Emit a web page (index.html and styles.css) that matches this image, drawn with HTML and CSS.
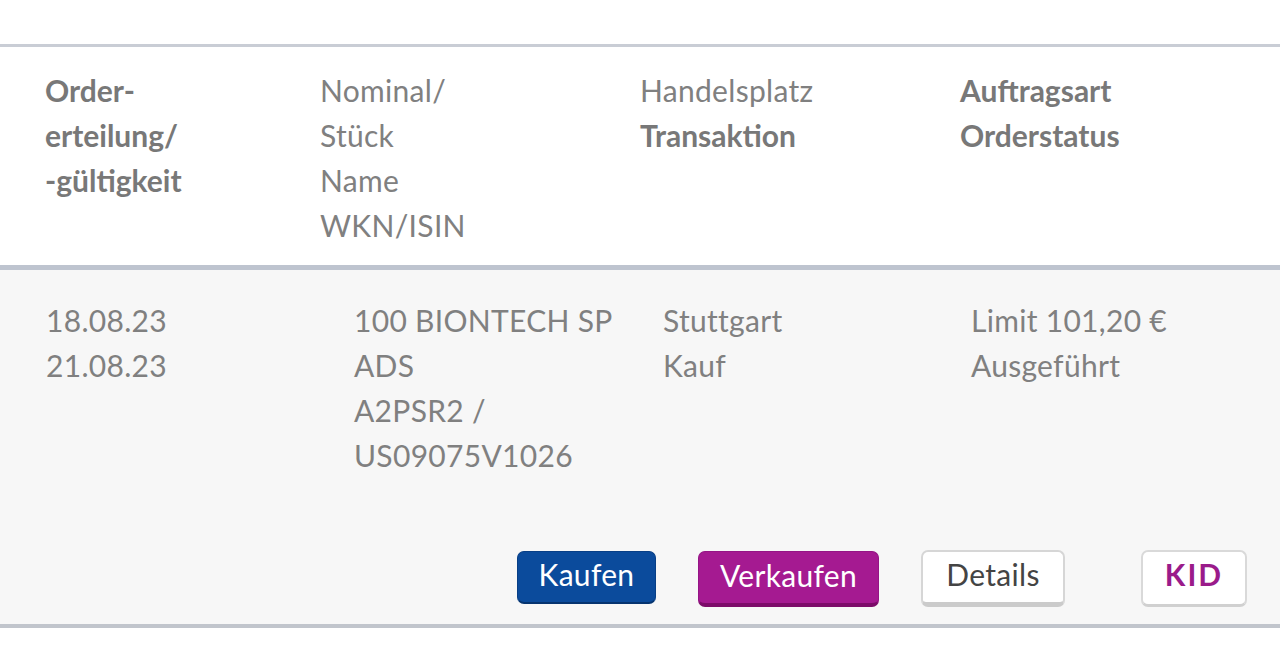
FILE: index.html
```html
<!DOCTYPE html>
<html lang="de">
<head>
<meta charset="utf-8">
<link rel="stylesheet" href="styles.css">
<title>Orderbuch</title>
</head>
<body>
<div class="page">
  <div class="top-space"></div>
  <div class="table">
    <div class="head">
      <div class="hcol c1"><b>Order-<br>erteilung/<br>-gültigkeit</b></div>
      <div class="hcol c2">Nominal/<br>Stück<br>Name<br>WKN/ISIN</div>
      <div class="hcol c3">Handelsplatz<br><b>Transaktion</b></div>
      <div class="hcol c4"><b>Auftragsart<br>Orderstatus</b></div>
    </div>
    <div class="row">
      <div class="cells">
        <div class="cell d1">18.08.23<br>21.08.23</div>
        <div class="cell d2">100 BIONTECH SP<br>ADS<br>A2PSR2 /<br>US09075V1026</div>
        <div class="cell d3">Stuttgart<br>Kauf</div>
        <div class="cell d4">Limit 101,20 €<br>Ausgeführt</div>
      </div>
      <div class="actions">
        <button class="btn buy">Kaufen</button>
        <button class="btn sell">Verkaufen</button>
        <button class="btn details">Details</button>
        <button class="btn kid">KID</button>
      </div>
    </div>
  </div>
</div>
</body>
</html>
```

FILE: styles.css
```css
html, body {
  margin: 0;
  padding: 0;
  background: #ffffff;
}
body {
  font-family: "Lato", "Liberation Sans", sans-serif;
  font-size: 30px;
  line-height: 45px;
  color: #808080;
  letter-spacing: 0.3px;
}
.page {
  width: 1280px;
  height: 646px;
  overflow: hidden;
}
.top-space {
  height: 44px;
}
.table {
  border-top: 3px solid #c9cdd5;
}
.head {
  display: grid;
  grid-template-columns: 275px 320px 320px 1fr;
  padding: 21px 0 17px 45px;
  background: #ffffff;
  border-bottom: 5px solid #bec4cf;
}
.head b {
  font-weight: 700;
  color: #787878;
  letter-spacing: 0;
}
.row {
  background: #f7f7f7;
  border-bottom: 4px solid #c1c5cc;
  padding: 28px 0 17px 0;
}
.cells {
  display: grid;
  grid-template-columns: 308px 309px 308px 1fr;
  padding-left: 46px;
  height: 180px;
}
.actions {
  display: flex;
  justify-content: flex-end;
  align-items: flex-start;
  gap: 42px;
  padding-right: 33px;
  margin-top: 72px;
}
.btn {
  font-family: inherit;
  font-size: 30px;
  line-height: 30px;
  border-radius: 7px;
  padding: 0 0 6px 0;
  cursor: pointer;
  box-sizing: border-box;
  letter-spacing: 0.3px;
}
.buy {
  width: 139px;
  height: 53px;
  margin-top: 1px;
  background: #0b4b9c;
  color: #ffffff;
  border: 1px solid #083f86;
  border-bottom: 2px solid #06346f;
  padding-bottom: 7px;
}
.sell {
  width: 181px;
  height: 56px;
  margin-top: 1px;
  background: #a51a91;
  color: #ffffff;
  border: 1px solid #951585;
  border-bottom: 4px solid #7c0b69;
  padding-bottom: 6px;
}
.details {
  width: 144px;
  height: 57px;
  background: #ffffff;
  color: #444444;
  border: 2px solid #d6d6d6;
  border-bottom: 5px solid #cbcbcb;
  padding-bottom: 6px;
}
.kid {
  width: 106px;
  height: 57px;
  margin-left: 34px;
  background: #ffffff;
  color: #9a1b8a;
  font-weight: 700;
  letter-spacing: 2px;
  border: 2px solid #d9d9d9;
  border-bottom: 3px solid #d0d0d0;
  padding-bottom: 8px;
}
```
